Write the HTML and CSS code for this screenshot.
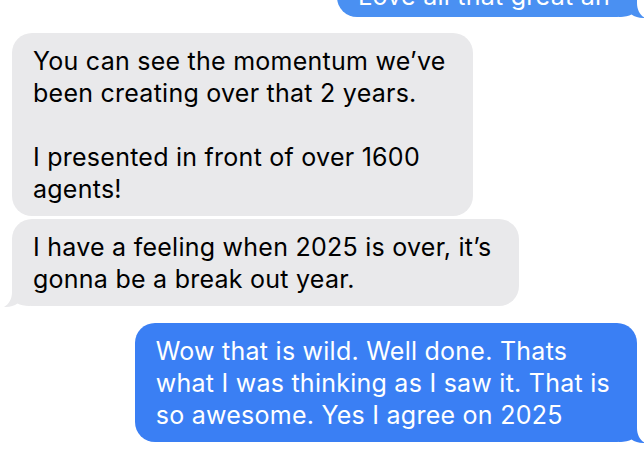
FILE: index.html
```html
<!DOCTYPE html>
<html>
<head>
<meta charset="utf-8">
<link rel="stylesheet" href="styles.css">
</head>
<body>
<div class="thread">
  <div class="bubble sent sent-top">Love all that great an
    <svg class="tail tail-right" width="26" height="22" viewBox="0 0 26 22"><path d="M8 0 L8 6 C8 13 5 18 0 21 C5 21.5 10 20 13.5 17.5 C16 19 20 20 26 20 L26 0 Z"/></svg>
  </div>
  <div class="bubble received first">You can see the momentum we’ve<br>been creating over that 2 years.<br><br>I presented in front of over 1600<br>agents!</div>
  <div class="bubble received last">I have a feeling when 2025 is over, it’s<br>gonna be a break out year.
    <svg class="tail tail-left" width="26" height="22" viewBox="0 0 26 22"><path d="M8 0 L8 6 C8 13 5 18 0 21 C5 21.5 10 20 13.5 17.5 C16 19 20 20 26 20 L26 0 Z"/></svg>
  </div>
  <div class="bubble sent main">Wow that is wild. Well done. Thats<br>what I was thinking as I saw it. That is<br>so awesome. Yes I agree on 2025
    <svg class="tail tail-right" width="26" height="22" viewBox="0 0 26 22"><path d="M8 0 L8 6 C8 13 5 18 0 21 C5 21.5 10 20 13.5 17.5 C16 19 20 20 26 20 L26 0 Z"/></svg>
  </div>
</div>
</body>
</html>
```
FILE: styles.css
```css
html, body {
  margin: 0;
  padding: 0;
  background: #ffffff;
  overflow: hidden;
}
body {
  width: 644px;
  height: 456px;
  font-family: "Inter", "Noto Sans", sans-serif;
}
.thread {
  display: flex;
  flex-direction: column;
  padding: 0 7px 0 12px;
}
.bubble {
  position: relative;
  white-space: nowrap;
  font-size: 25px;
  letter-spacing: 0.25px;
  line-height: 32px;
  padding: 12px 27px 11px 21px;
  border-radius: 20px;
}
.received {
  align-self: flex-start;
  background: #e9e9eb;
  color: #000;
}
.received .tail path { fill: #e9e9eb; }
.sent {
  align-self: flex-end;
  background: #3a7ff4;
  color: #fff;
}
.sent .tail path { fill: #3a7ff4; }
.sent-top {
  margin-top: -32px;
  padding-bottom: 5px;
  background: #4a90f2;
}
.sent-top .tail path { fill: #4a90f2; }
.first { margin-top: 16px; }
.last { margin-top: 3px; }
.main { margin-top: 17px; }
.tail {
  position: absolute;
  bottom: -2px;
  display: block;
}
.tail-left { left: -8px; }
.tail-right { right: -8px; transform: scaleX(-1); }
```
